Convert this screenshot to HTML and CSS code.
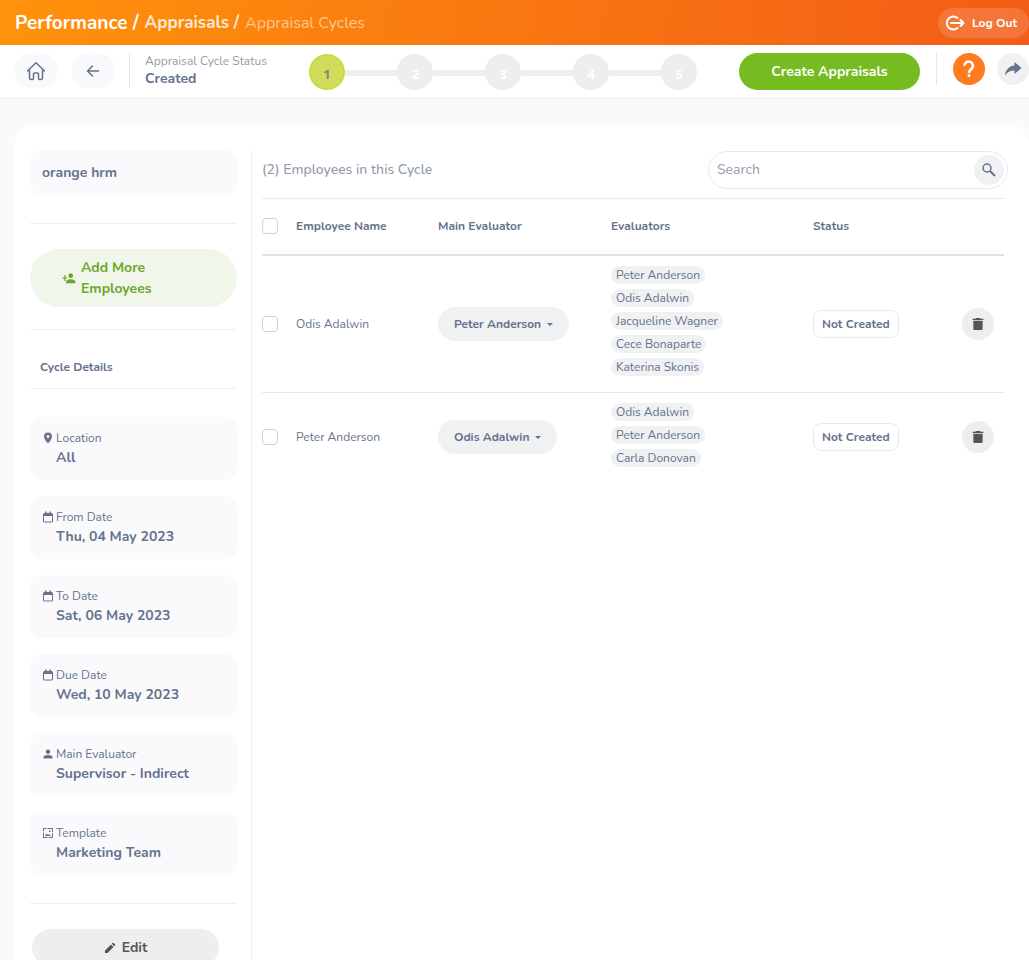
FILE: index.html
```html
<!DOCTYPE html>
<html lang="en">
<head>
  <meta charset="UTF-8">
  <meta name="viewport" content="width=device-width, initial-scale=1">
  <title>Appraisal Cycles</title>
  <link rel="stylesheet" href="styles.css">
</head>
<body>
  <svg class="sprite" aria-hidden="true">
    <symbol id="calendar" viewBox="0 0 24 24"><path d="M19 4h-1V1h-3v3H9V1H6v3H5a3 3 0 0 0-3 3v13a3 3 0 0 0 3 3h14a3 3 0 0 0 3-3V7a3 3 0 0 0-3-3zm1 16a1 1 0 0 1-1 1H5a1 1 0 0 1-1-1V10h16z"/></symbol>
    <symbol id="trash" viewBox="0 0 24 24"><path d="M5 19a2 2 0 0 0 2 2h10a2 2 0 0 0 2-2V7H5v12zM20 4h-4l-1-1H9L8 4H4v2h16V4z"/></symbol>
  </svg>

  <header class="topbar">
    <nav class="breadcrumb" aria-label="Breadcrumb">
      <a class="crumb-main" href="#">Performance /</a>
      <a class="crumb-mid" href="#">Appraisals /</a>
      <span class="crumb-current">Appraisal Cycles</span>
    </nav>
    <button class="logout">
      <svg width="20" height="16" viewBox="0 0 20 16" fill="none" stroke="currentColor" stroke-width="2" stroke-linecap="round" stroke-linejoin="round"><path d="M12.500 3A6.500 6.500 0 1 0 12.500 13M6 8h12M15.500 5l3 3-3 3"/></svg>
      Log Out
    </button>
  </header>

  <div class="toolbar">
    <button class="tool-btn" aria-label="Home">
      <svg width="20" height="20" viewBox="0 0 20 20" fill="none" stroke="currentColor" stroke-width="1.5" stroke-linecap="round" stroke-linejoin="round"><path d="M1.500 10L10 1.700l8.500 8.300M3.500 9v7.500a2 2 0 0 0 2 2h1a1 1 0 0 0 1-1V13a1 1 0 0 1 1-1h3a1 1 0 0 1 1 1v4.500a1 1 0 0 0 1 1h1a2 2 0 0 0 2-2V9"/></svg>
    </button>
    <button class="tool-btn" aria-label="Back">
      <svg width="14" height="14" viewBox="0 0 14 14" fill="none" stroke="currentColor" stroke-width="1.5" stroke-linecap="round" stroke-linejoin="round"><path d="M12.500 7h-11M6.500 2l-5 5 5 5"/></svg>
    </button>
    <div class="cycle-status">
      <span>Appraisal Cycle Status</span>
      <strong>Created</strong>
    </div>
    <ol class="steps">
      <li class="active">1</li>
      <li>2</li>
      <li>3</li>
      <li>4</li>
      <li>5</li>
    </ol>
    <button class="create-btn">Create Appraisals</button>
    <div class="tool-icons">
      <button class="round help" aria-label="Help">
        <svg width="14" height="18" viewBox="0 0 14 18" fill="none" stroke="currentColor" stroke-width="2.6"><path d="M2.500 5.800a4.200 4.200 0 1 1 7.200 2.900C8.200 10.200 7 10.700 7 13M7 14.300v2.700"/></svg>
      </button>
      <button class="round" aria-label="Share">
        <svg width="18" height="16" viewBox="0 0 18 16" fill="currentColor"><path d="M10.500 1l7 6-7 6V9.500C6 9.500 3 11 1 14.500 1.500 9 5 5 10.500 4.500z"/></svg>
      </button>
    </div>
  </div>

  <main class="card">
    <aside class="sidebar">
      <div class="cycle-name">orange hrm</div>
      <div class="add-wrap">
        <button class="add-btn">
          <svg width="14" height="14" viewBox="0 0 24 24" fill="currentColor"><path d="M15 12a4 4 0 1 0 0-8 4 4 0 0 0 0 8zM6 11V7H4v4H0v2h4v4h2v-4h3v-2zM15 14c-2.700 0-8 1.300-8 4v3h16v-3c0-2.700-5.300-4-8-4z"/></svg>
          <span>Add More Employees</span>
        </button>
      </div>
      <h2 class="details-title">Cycle Details</h2>
      <dl class="details">
        <div class="detail">
          <dt><svg viewBox="0 0 24 24"><path d="M12 1a8 8 0 0 0-8 8c0 6 8 14 8 14s8-8 8-14a8 8 0 0 0-8-8zm0 11a3 3 0 1 1 0-6 3 3 0 0 1 0 6z"/></svg>Location</dt>
          <dd>All</dd>
        </div>
        <div class="detail">
          <dt><svg><use href="#calendar"/></svg>From Date</dt>
          <dd>Thu, 04 May 2023</dd>
        </div>
        <div class="detail">
          <dt><svg><use href="#calendar"/></svg>To Date</dt>
          <dd>Sat, 06 May 2023</dd>
        </div>
        <div class="detail">
          <dt><svg><use href="#calendar"/></svg>Due Date</dt>
          <dd>Wed, 10 May 2023</dd>
        </div>
        <div class="detail">
          <dt><svg viewBox="0 0 24 24"><path d="M12 12a4.500 4.500 0 1 0 0-9 4.500 4.500 0 0 0 0 9zm0 2c-3 0-9 1.300-9 4v3h18v-3c0-2.700-6-4-9-4z"/></svg>Main Evaluator</dt>
          <dd>Supervisor - Indirect</dd>
        </div>
        <div class="detail">
          <dt><svg viewBox="0 0 24 24"><path d="M2 2h7v2H4v5H2zM11 2h11v8h-2V4h-9zM20 12h2v10h-9v-2h7zM2 11h2v9h7v2H2zM6 18l3.500-5 2.500 3 2-2 4 4zM14 7h3v3h-3z"/></svg>Template</dt>
          <dd>Marketing Team</dd>
        </div>
      </dl>
      <button class="edit-btn">
        <svg width="12" height="12" viewBox="0 0 24 24" fill="currentColor"><path d="M2 22v-5L14 5l5 5L7 22zM20.500 8.500l-5-5 1.700-1.700a1.500 1.500 0 0 1 2 0l3 3a1.500 1.500 0 0 1 0 2z"/></svg>
        Edit
      </button>
    </aside>

    <section class="content">
      <div class="list-head">
        <h1>(2) Employees in this Cycle</h1>
        <form class="search">
          <input type="search" placeholder="Search" aria-label="Search">
          <button type="button" aria-label="Search employees">
            <svg width="14" height="14" viewBox="0 0 14 14" fill="none" stroke="currentColor" stroke-width="1.5"><circle cx="5" cy="5" r="4"/><path d="M8 8l5 5" stroke-width="2"/></svg>
          </button>
        </form>
      </div>

      <table class="employees">
        <colgroup>
          <col class="c-check"><col class="c-name"><col class="c-main"><col class="c-evals"><col class="c-status"><col class="c-action">
        </colgroup>
        <thead>
          <tr>
            <th><input type="checkbox" aria-label="Select all"></th>
            <th>Employee Name</th>
            <th>Main Evaluator</th>
            <th>Evaluators</th>
            <th>Status</th>
            <th></th>
          </tr>
        </thead>
        <tbody>
          <tr>
            <td><input type="checkbox" aria-label="Select Odis Adalwin"></td>
            <td>Odis Adalwin</td>
            <td><button class="dropdown">Peter Anderson</button></td>
            <td class="evaluators">
              <ul class="chips">
                <li>Peter Anderson</li>
                <li>Odis Adalwin</li>
                <li>Jacqueline Wagner</li>
                <li>Cece Bonaparte</li>
                <li>Katerina Skonis</li>
              </ul>
            </td>
            <td><span class="status">Not Created</span></td>
            <td><button class="round delete" aria-label="Delete"><svg width="16" height="16"><use href="#trash"/></svg></button></td>
          </tr>
          <tr>
            <td><input type="checkbox" aria-label="Select Peter Anderson"></td>
            <td>Peter Anderson</td>
            <td><button class="dropdown">Odis Adalwin</button></td>
            <td class="evaluators">
              <ul class="chips">
                <li>Odis Adalwin</li>
                <li>Peter Anderson</li>
                <li>Carla Donovan</li>
              </ul>
            </td>
            <td><span class="status">Not Created</span></td>
            <td><button class="round delete" aria-label="Delete"><svg width="16" height="16"><use href="#trash"/></svg></button></td>
          </tr>
        </tbody>
      </table>
    </section>
  </main>
</body>
</html>
```
FILE: styles.css
```css
* {
  box-sizing: border-box;
}

body {
  margin: 0;
  height: 100vh;
  overflow: hidden;
  display: flex;
  flex-direction: column;
  background: #fafafa;
  color: #64728c;
  font-family: Nunito, "Open Sans", "Noto Sans", sans-serif;
  font-size: 12px;
  line-height: 18px;
}

button {
  display: inline-flex;
  align-items: center;
  justify-content: center;
  padding: 0;
  border: 0;
  font: inherit;
  font-weight: 700;
  color: inherit;
  cursor: pointer;
}

.sprite {
  display: none;
}

/* top bar */
.topbar {
  display: flex;
  flex-shrink: 0;
  align-items: center;
  justify-content: space-between;
  height: 45px;
  padding-left: 15px;
  background: linear-gradient(100deg, #ff920b, #f35c17);
  color: #fff;
}

.breadcrumb {
  display: flex;
  align-items: center;
  gap: 6px;
  line-height: 24px;
}

.breadcrumb a {
  color: inherit;
  font-weight: 700;
  text-decoration: none;
}

.breadcrumb .crumb-main {
  font-size: 19px;
}

.breadcrumb .crumb-mid {
  color: #ffe9d3;
  font-size: 17px;
}

.crumb-current {
  color: #ffc692;
  font-size: 16px;
}

.logout {
  gap: 7px;
  height: 30px;
  padding: 0 12px 0 7px;
  border-radius: 15px;
  background: rgba(255, 255, 255, 0.15);
}

/* toolbar */
.toolbar {
  display: flex;
  flex-shrink: 0;
  align-items: flex-start;
  height: 54px;
  padding: 8px 0 0 15px;
  border-bottom: 1px solid #efefef;
  background: #fff;
}

.tool-btn {
  width: 42px;
  height: 35px;
  margin-right: 15px;
  border-radius: 15px;
  background: #f8f9fc;
}

.cycle-status {
  display: flex;
  flex-direction: column;
  width: 180px;
  height: 35px;
  padding-left: 15px;
  border-left: 1px solid #e6e8ed;
  color: #929bac;
  line-height: 17px;
}

.cycle-status strong {
  color: #64728c;
  font-size: 14px;
  font-weight: 700;
}

.steps {
  display: flex;
  align-items: center;
  margin: 1px 0 0;
  padding: 0;
  list-style: none;
}

.steps li {
  width: 36px;
  height: 36px;
  padding-top: 3px;
  border-radius: 50%;
  background: #eee;
  color: #fff;
  font: bold 13px/34px "Open Sans", sans-serif;
  text-align: center;
}

.steps li + li {
  margin-left: 52px;
  position: relative;
}

.steps li + li::before {
  content: "";
  position: absolute;
  top: 16px;
  right: 100%;
  width: 52px;
  height: 6px;
  background: #eee;
}

.steps .active {
  padding-top: 1px;
  border: 2px solid #cbdb43;
  background: #d1dc5d;
  color: #808775;
}

.create-btn {
  width: 181px;
  height: 37px;
  margin-left: auto;
  border-radius: 19px;
  background: #76bc21;
  color: #fff;
  font-size: 14px;
}

.tool-icons {
  display: flex;
  gap: 12px;
  margin-left: 16px;
  padding-left: 16px;
  border-left: 1px solid #e6e8ed;
}

.round {
  width: 32px;
  height: 32px;
  border-radius: 50%;
  background: #eff1f3;
}

.help {
  background: #ff7b1d;
  color: #fff;
}

/* main card */
.card {
  display: flex;
  flex: 1;
  align-items: flex-start;
  margin: 26px 0 0 15px;
  padding: 25px 21px 0 15px;
  border-radius: 20px 20px 0 0;
  background: #fff;
}

.sidebar {
  flex: 0 0 207px;
}

.cycle-name {
  padding: 14px 12px 13px;
  border-radius: 12px;
  background: #fafafc;
  font-size: 14px;
  font-weight: 700;
}

.add-wrap {
  margin-top: 28px;
  padding: 25px 0 22px;
  border: solid #efefef;
  border-width: 1px 0;
}

.add-btn {
  justify-content: flex-start;
  gap: 5px;
  width: 100%;
  height: 58px;
  padding: 0 70px 0 32px;
  border-radius: 29px;
  background: #f0f6e9;
  color: #6aa72b;
  font-size: 14px;
  line-height: 21px;
  text-align: left;
}

.add-btn svg {
  flex-shrink: 0;
}

.details-title {
  margin: 0;
  padding: 28px 10px 12px;
  border-bottom: 1px solid #efefef;
  font-size: 12px;
  font-weight: 700;
}

.details {
  display: flex;
  flex-direction: column;
  gap: 16px;
  margin: 0;
  padding: 28px 0;
  border-bottom: 1px solid #efefef;
}

.detail {
  height: 63px;
  padding: 12px 12px 0;
  border-radius: 12px;
  background: #fafafc;
}

.detail dt {
  display: flex;
  align-items: center;
  gap: 2px;
}

.detail dt svg {
  width: 12px;
  height: 12px;
  fill: currentColor;
}

.detail dd {
  margin: 0 0 0 14px;
  font-size: 14px;
  font-weight: 700;
  line-height: 22px;
}

.edit-btn {
  gap: 6px;
  width: 187px;
  height: 37px;
  margin: 25px 0 25px 2px;
  border-radius: 19px;
  background: #eee;
  color: #555;
  font-size: 14px;
}

/* employee list */
.content {
  flex: 1;
  align-self: stretch;
  min-width: 0;
  margin-left: 14px;
  padding-left: 10px;
  border-left: 1px solid #efefef;
}

.list-head {
  display: flex;
  justify-content: space-between;
  align-items: center;
  height: 40px;
}

.list-head h1 {
  margin: 0;
  color: #929bac;
  font-size: 14px;
  font-weight: 500;
}

.search {
  display: flex;
  align-items: center;
  width: 300px;
  height: 38px;
  padding: 0 3px 0 8px;
  border: 1px solid #e8eaef;
  border-radius: 19px;
}

.search input {
  flex: 1;
  min-width: 0;
  padding: 0;
  border: 0;
  outline: 0;
  background: none;
  font: inherit;
  font-size: 14px;
}

.search input::placeholder {
  color: #929bac;
}

.search button {
  width: 30px;
  height: 30px;
  border-radius: 50%;
  background: #eff1f3;
}

.employees {
  width: calc(100% - 4px);
  margin-top: 8px;
  border-top: 1px solid #e8eaef;
  border-collapse: separate;
  border-spacing: 0;
  table-layout: fixed;
}

.c-check { width: 34px; }
.c-name { width: 142px; }
.c-main { width: 173px; }
.c-evals { width: 202px; }
.c-action { width: 42px; }

.employees th {
  height: 57px;
  padding: 0 0 1px;
  border-bottom: 2px solid #dee2e6;
  font-weight: 700;
  text-align: left;
}

.employees td {
  padding: 0;
}

.employees .evaluators {
  padding: 10px 0 16px;
}

.employees tbody tr:last-child .evaluators {
  padding-bottom: 14px;
}

.employees tbody tr:first-child td {
  border-bottom: 1px solid #e8eaef;
}

.employees input {
  display: block;
  appearance: none;
  width: 16px;
  height: 16px;
  margin: 0;
  border: 1px solid #cdd1df;
  border-radius: 4px;
  background: #fff;
}

.dropdown {
  gap: 6px;
  height: 34px;
  padding: 0 16px;
  border-radius: 17px;
  background: #eff1f3;
}

.dropdown::after {
  content: "";
  border: solid transparent;
  border-width: 3px 3px 0;
  border-top-color: currentColor;
}

.chips {
  display: flex;
  flex-direction: column;
  align-items: flex-start;
  gap: 5px;
  margin: 0;
  padding: 0;
  list-style: none;
}

.chips li {
  padding: 0 5px;
  border-radius: 9px;
  background: #eff1f3;
}

.status {
  display: inline-block;
  padding: 4px 8px;
  border: 1px solid #e8eaef;
  border-radius: 8px;
  font-weight: 700;
}

.delete {
  background: #eee;
  color: #555;
}

.delete svg {
  fill: currentColor;
}
```
